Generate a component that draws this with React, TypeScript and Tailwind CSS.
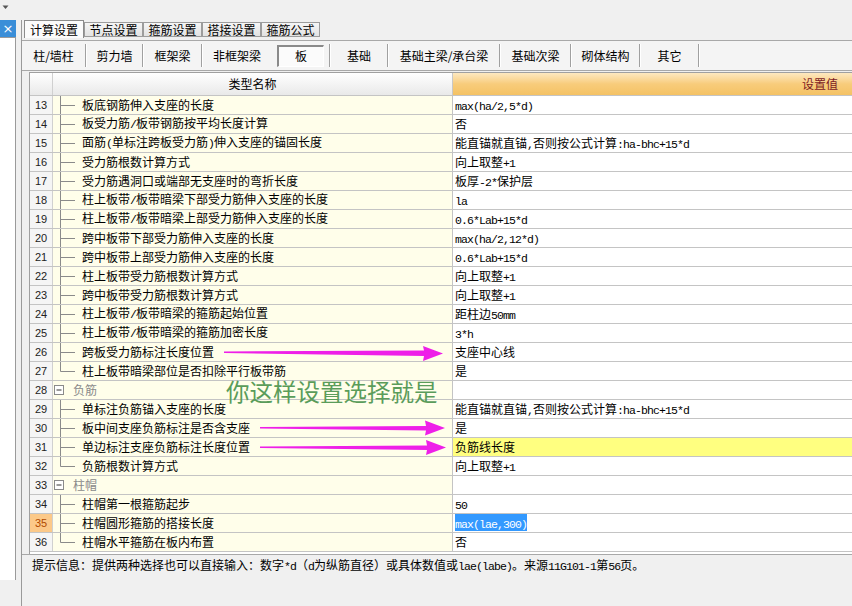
import React from "react";

type Row = {
  n: number;
  name: string;
  v?: string;
  t: "mid" | "end" | "group";
  sel?: boolean;
  hl?: boolean;
};

const rows: Row[] = [
  { n: 13, name: "板底钢筋伸入支座的长度", v: "max(ha/2,5*d)", t: "mid" },
  { n: 14, name: "板受力筋/板带钢筋按平均长度计算", v: "否", t: "mid" },
  { n: 15, name: "面筋(单标注跨板受力筋)伸入支座的锚固长度", v: "能直锚就直锚,否则按公式计算:ha-bhc+15*d", t: "mid" },
  { n: 16, name: "受力筋根数计算方式", v: "向上取整+1", t: "mid" },
  { n: 17, name: "受力筋遇洞口或端部无支座时的弯折长度", v: "板厚-2*保护层", t: "mid" },
  { n: 18, name: "柱上板带/板带暗梁下部受力筋伸入支座的长度", v: "la", t: "mid" },
  { n: 19, name: "柱上板带/板带暗梁上部受力筋伸入支座的长度", v: "0.6*Lab+15*d", t: "mid" },
  { n: 20, name: "跨中板带下部受力筋伸入支座的长度", v: "max(ha/2,12*d)", t: "mid" },
  { n: 21, name: "跨中板带上部受力筋伸入支座的长度", v: "0.6*Lab+15*d", t: "mid" },
  { n: 22, name: "柱上板带受力筋根数计算方式", v: "向上取整+1", t: "mid" },
  { n: 23, name: "跨中板带受力筋根数计算方式", v: "向上取整+1", t: "mid" },
  { n: 24, name: "柱上板带/板带暗梁的箍筋起始位置", v: "距柱边50mm", t: "mid" },
  { n: 25, name: "柱上板带/板带暗梁的箍筋加密长度", v: "3*h", t: "mid" },
  { n: 26, name: "跨板受力筋标注长度位置", v: "支座中心线", t: "mid" },
  { n: 27, name: "柱上板带暗梁部位是否扣除平行板带筋", v: "是", t: "end" },
  { n: 28, name: "负筋", t: "group" },
  { n: 29, name: "单标注负筋锚入支座的长度", v: "能直锚就直锚,否则按公式计算:ha-bhc+15*d", t: "mid" },
  { n: 30, name: "板中间支座负筋标注是否含支座", v: "是", t: "mid" },
  { n: 31, name: "单边标注支座负筋标注长度位置", v: "负筋线长度", t: "mid", hl: true },
  { n: 32, name: "负筋根数计算方式", v: "向上取整+1", t: "end" },
  { n: 33, name: "柱帽", t: "group" },
  { n: 34, name: "柱帽第一根箍筋起步", v: "50", t: "mid" },
  { n: 35, name: "柱帽圆形箍筋的搭接长度", v: "max(lae,300)", t: "mid", sel: true },
  { n: 36, name: "柱帽水平箍筋在板内布置", v: "否", t: "end" },
];

function Mixed({ t }: { t: string }) {
  const parts = t.split(/([\x20-\x7e]+)/);
  return (
    <>
      {parts.map((p, i) =>
        p === "" ? null : /^[\x20-\x7e]+$/.test(p) ? (
          <span key={i} className="font-['Liberation_Mono',monospace] text-[11.5px] tracking-[-0.9px]">
            {p}
          </span>
        ) : (
          <span key={i}>{p}</span>
        )
      )}
    </>
  );
}

function Sep() {
  return <div className="w-[2px] h-[23px] border-l border-l-[#a0a0a0] border-r border-r-white shrink-0" />;
}

function SubItem({ label, w }: { label: string; w: string }) {
  return (
    <div className={`${w} h-full flex items-center shrink-0`}>
      <div className="flex-1 text-center">{label}</div>
      <Sep />
    </div>
  );
}

function Connector({ t }: { t: "mid" | "end" }) {
  return (
    <svg width="29" height="18" className="shrink-0">
      <line x1="7.5" y1="0" x2="7.5" y2={t === "mid" ? 18 : 9.5} stroke="#8a8a8a" strokeWidth="1" />
      <line x1="7.5" y1="9.5" x2="22" y2="9.5" stroke="#8a8a8a" strokeWidth="1" />
    </svg>
  );
}

function GroupBox() {
  return (
    <svg width="20" height="18" className="shrink-0">
      <rect x="1.5" y="4.5" width="9" height="9" fill="#ffffff" stroke="#8a8a8a" />
      <line x1="3.5" y1="9" x2="8.5" y2="9" stroke="#333" strokeWidth="1" />
    </svg>
  );
}

export default function App() {
  return (
    <div className="w-[852px] h-[606px] bg-[#f0f0f0] relative overflow-hidden flex flex-col font-['Noto_Sans_CJK_SC',sans-serif] text-[12px] text-black">
      {/* top strip */}
      <div className="h-[20px] shrink-0 flex items-start">
        <svg width="10" height="10" className="ml-[1px] mt-[3px]">
          <polygon points="1.5,2.5 7.5,2.5 4.5,6" fill="#555" />
        </svg>
      </div>

      <div className="flex-1 flex min-h-0">
        {/* left panel */}
        <div className="w-[21px] shrink-0 flex flex-col">
          <div className="h-[17px] w-[16px] bg-[#3a8ed8] flex items-center justify-center text-white text-[13px] leading-none font-['DejaVu_Sans',sans-serif]">
            ×
          </div>
          <div className="w-[16px] h-[543px] bg-white border-t border-r border-[#9a9a9a]" />
        </div>

        {/* main */}
        <div className="flex-1 flex flex-col border-l border-l-[#9a9a9a] min-w-0">
          {/* tabs */}
          <div className="h-[18px] flex items-end shrink-0">
            <div className="ml-[2px] w-[60px] h-[18px] bg-[#fbfbfb] border border-b-0 border-[#8c8c8c] flex items-center justify-center text-[12px] leading-none">
              计算设置
            </div>
            {["节点设置", "箍筋设置", "搭接设置", "箍筋公式"].map((t) => (
              <div
                key={t}
                className="w-[59px] h-[15px] mb-[1px] bg-linear-to-b from-[#f6f6f6] to-[#e2e2e2] border border-[#9c9c9c] flex items-center justify-center leading-none"
              >
                {t}
              </div>
            ))}
          </div>

          {/* sub bar */}
          <div className="mt-[2px] h-[31px] shrink-0 bg-[#f4f4f4] border-t border-b border-[#a8a8a8] flex items-center">
            <SubItem label="柱/墙柱" w="w-[65px]" />
            <SubItem label="剪力墙" w="w-[57px]" />
            <SubItem label="框架梁" w="w-[59px]" />
            <div className="w-[68px] h-full flex items-center justify-center shrink-0">非框架梁</div>
            <div className="w-[60px] h-full flex items-center shrink-0 pl-[6px]">
              <div className="w-[47px] h-[22px] bg-[#fbfbfb] border-t-2 border-l-2 border-t-[#8a8a8a] border-l-[#8a8a8a] border-b border-r border-b-white border-r-white flex items-center justify-center">
                板
              </div>
              <div className="flex-1" />
              <Sep />
            </div>
            <SubItem label="基础" w="w-[58px]" />
            <SubItem label="基础主梁/承台梁" w="w-[112px]" />
            <SubItem label="基础次梁" w="w-[71px]" />
            <SubItem label="砌体结构" w="w-[69px]" />
            <SubItem label="其它" w="w-[59px]" />
          </div>

          {/* table */}
          <div className="mt-[1px] ml-[7px] bg-white border-l border-t border-[#a0a0a0] pb-[2px] shrink-0">
            {/* header */}
            <div className="h-[23px] flex border-b border-[#c4c4c4]">
              <div className="w-[23px] shrink-0 bg-linear-to-b from-white to-[#e9e9e9] border-r border-[#d0d0d0]" />
              <div className="w-[400px] shrink-0 bg-linear-to-b from-white to-[#e9e9e9] border-r border-[#c8c8c8] flex items-center justify-center">
                类型名称
              </div>
              <div className="flex-1 bg-linear-to-b from-[#fde8c0] via-[#f8cc7b] to-[#f4c264] flex items-center justify-end pr-[14px] text-[#7d1a24]">
                设置值
              </div>
            </div>
            {rows.map((r) => (
              <div key={r.n} className="h-[19px] flex border-b border-[#c4c4c4] leading-[18px]">
                <div
                  className={`w-[23px] shrink-0 border-r border-[#d0d0d0] pl-[5px] font-['Liberation_Sans',sans-serif] text-[11px] ${
                    r.sel ? "bg-[#fcc989] text-[#b04a00]" : "bg-[#f5f5f5] text-[#222]"
                  }`}
                >
                  {r.n}
                </div>
                <div className="w-[400px] shrink-0 bg-[#fffeea] border-r border-[#c4c4c4] flex items-center overflow-hidden whitespace-nowrap">
                  {r.t === "group" ? (
                    <>
                      <GroupBox />
                      <span className="text-[#8a8a8a]">{r.name}</span>
                    </>
                  ) : (
                    <>
                      <Connector t={r.t} />
                      <span>
                        <Mixed t={r.name} />
                      </span>
                    </>
                  )}
                </div>
                <div className={`flex-1 pl-[2px] whitespace-nowrap overflow-hidden ${r.hl ? "bg-[#ffff80]" : "bg-white"}`}>
                  {r.v ? (
                    r.sel ? (
                      <span className="bg-[#3399ff] text-white">
                        <Mixed t={r.v} />
                      </span>
                    ) : (
                      <Mixed t={r.v} />
                    )
                  ) : null}
                </div>
              </div>
            ))}
          </div>

          {/* hint */}
          <div className="flex-1 border-t border-[#a8a8a8] bg-[#f0f0f0] pl-[10px] pt-[2px] leading-[16px] whitespace-nowrap">
            <Mixed t="提示信息：提供两种选择也可以直接输入：数字*d（d为纵筋直径）或具体数值或lae(labe)。来源11G101-1第56页。" />
          </div>
        </div>
      </div>

      {/* annotation overlay */}
      <div className="absolute left-[226px] top-[380px] text-[23.5px] leading-none text-[#5a9c5a] whitespace-nowrap pointer-events-none">
        你这样设置选择就是
      </div>
      <svg className="absolute left-0 top-0 pointer-events-none" width="852" height="606">
        <polygon points="224,351.5 424,350.5 423,346 443,353.5 423,361 424,356 224,353" fill="#ee1fe8" />
        <polygon points="260,427 426,426 425,420.5 445,428 425,435.5 426,430.5 260,428.5" fill="#ee1fe8" />
        <polygon points="260,446.5 427,445.5 426,440 446,447.5 426,455 427,450 260,448" fill="#ee1fe8" />
      </svg>
    </div>
  );
}
